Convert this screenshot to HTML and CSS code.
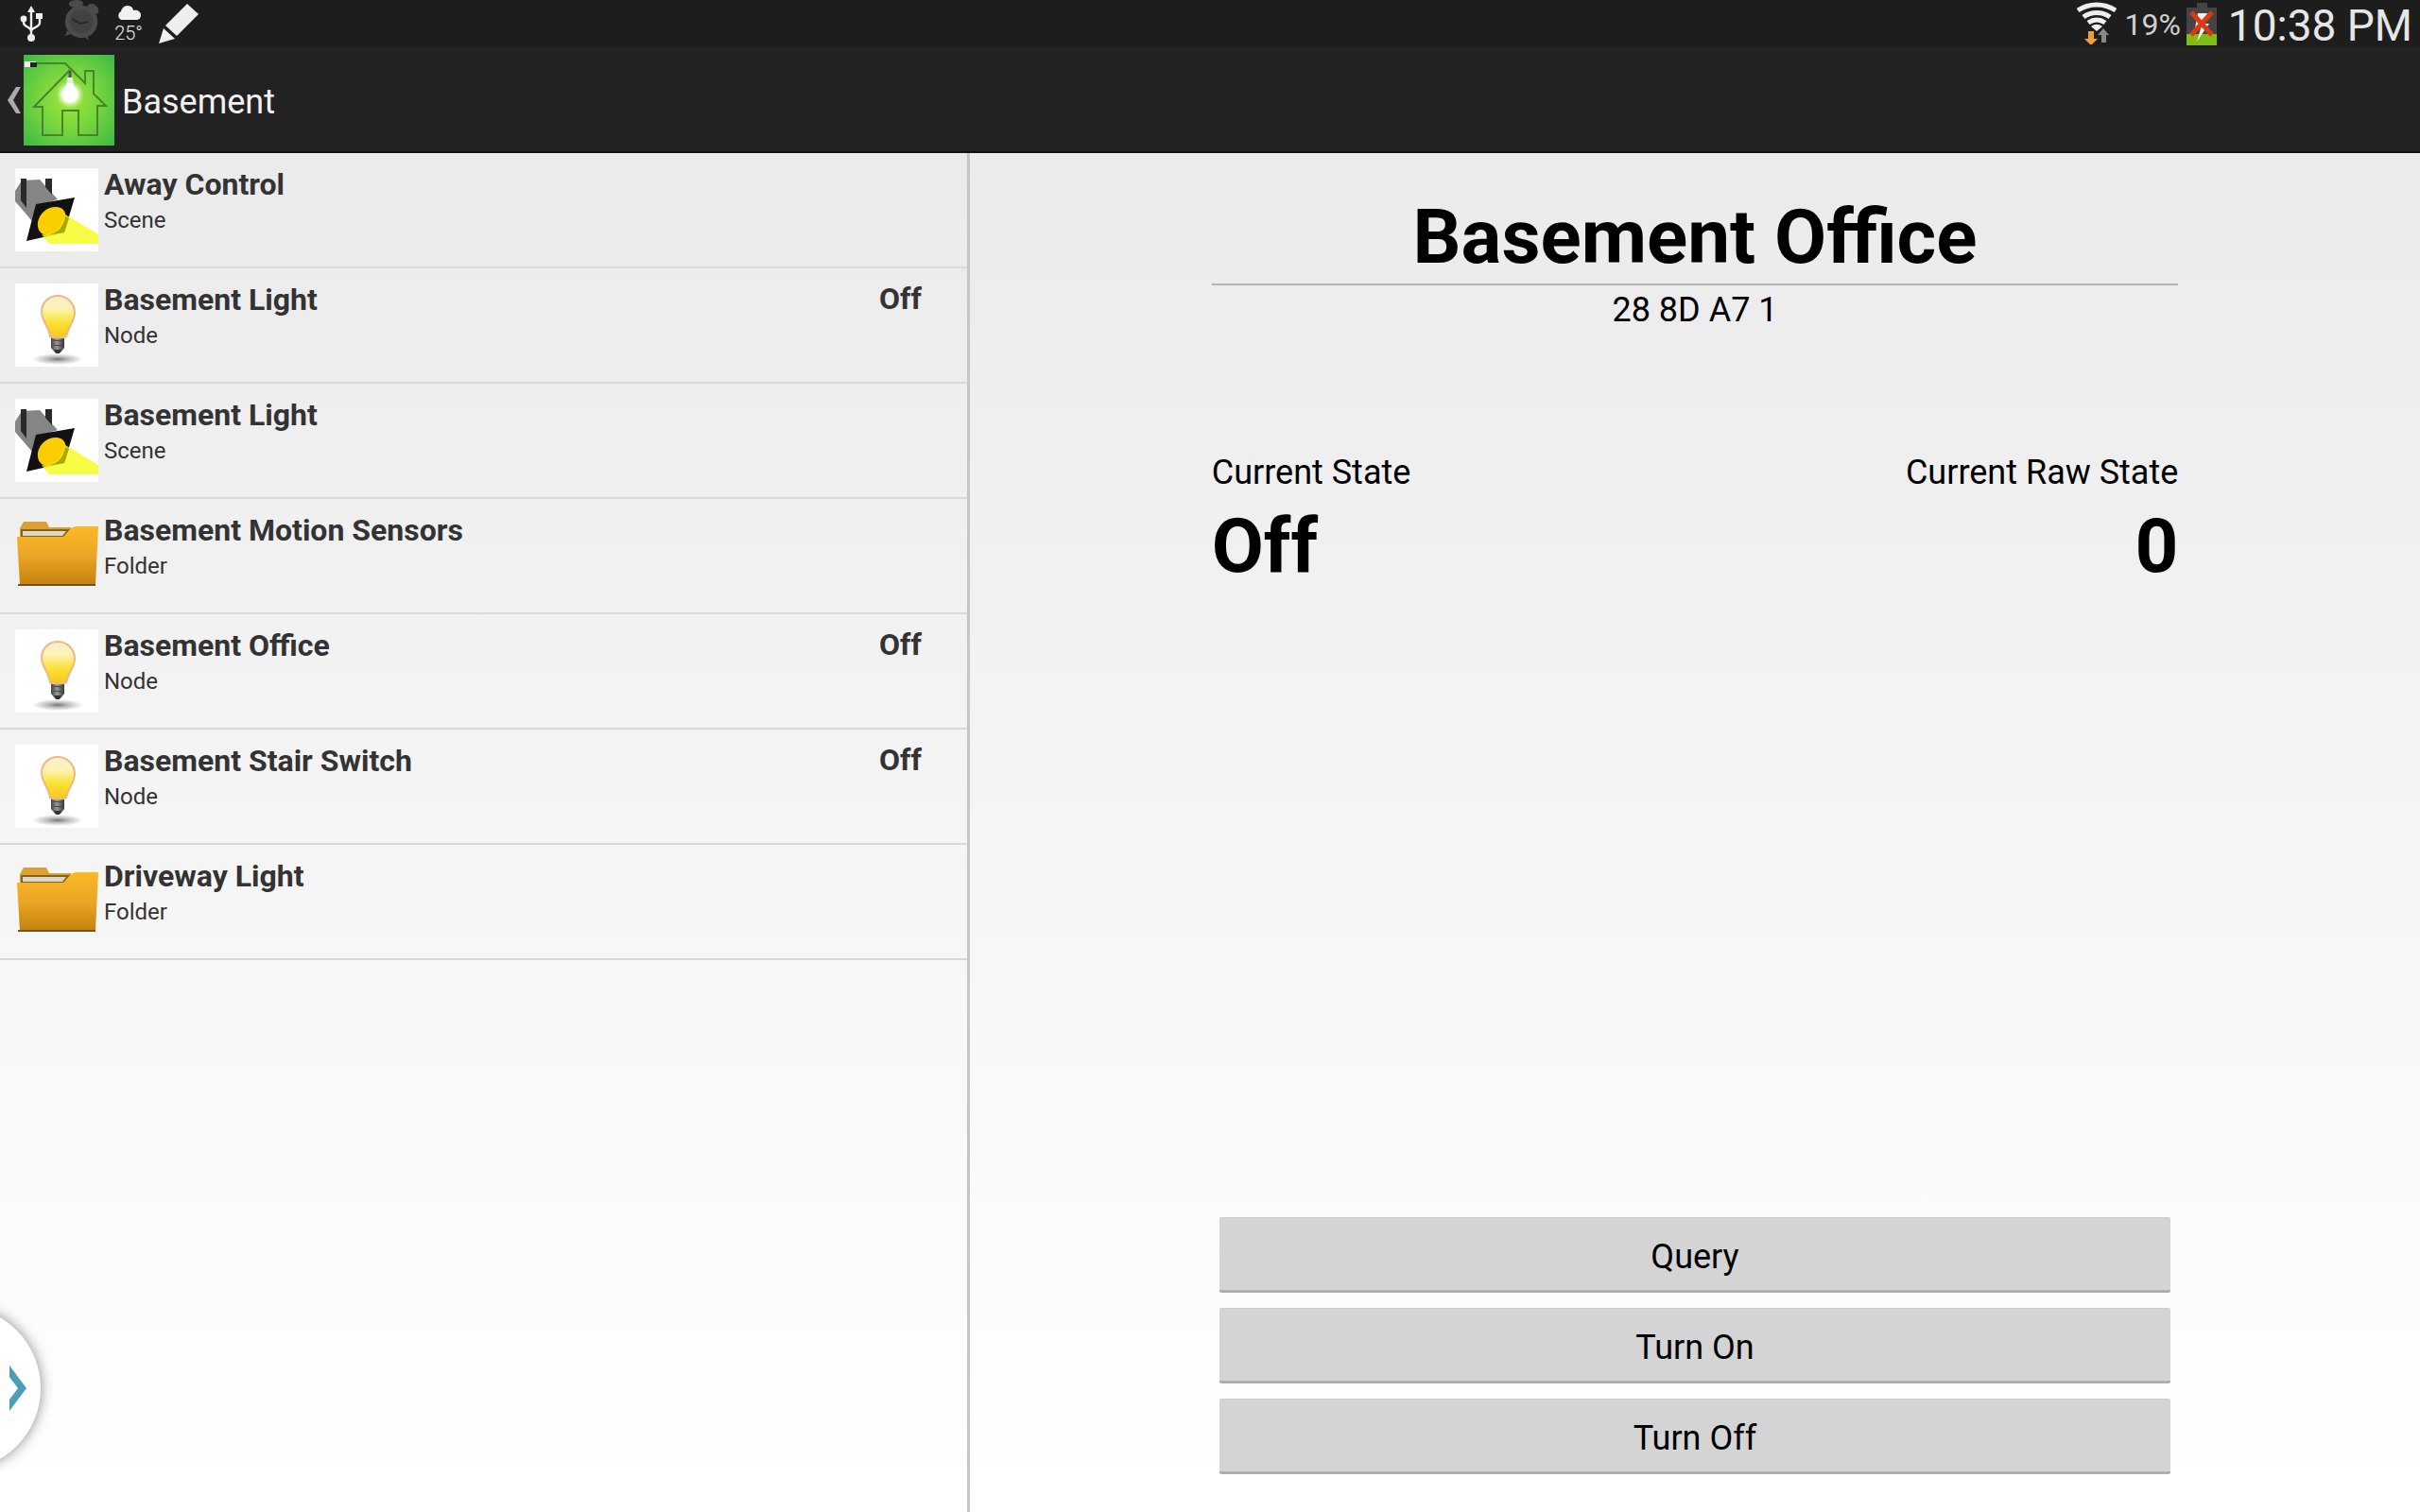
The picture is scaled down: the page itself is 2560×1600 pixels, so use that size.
FILE: index.html
```html
<!DOCTYPE html>
<html lang="en">
<head>
<meta charset="utf-8">
<meta name="viewport" content="width=device-width, initial-scale=1">
<title>Basement</title>
<link rel="stylesheet" href="styles.css">
</head>
<body>
<svg class="defs" aria-hidden="true">
  <defs>
    <linearGradient id="glass" x1="0" y1="0" x2="0" y2="1">
      <stop offset="0" stop-color="#fbeed2"/><stop offset=".3" stop-color="#fdf3b4"/><stop offset=".65" stop-color="#fbe032"/><stop offset="1" stop-color="#f6c81c"/>
    </linearGradient>
    <linearGradient id="cap" x1="0" y1="0" x2="1" y2="0">
      <stop offset="0" stop-color="#444"/><stop offset=".45" stop-color="#999"/><stop offset="1" stop-color="#333"/>
    </linearGradient>
    <radialGradient id="shade">
      <stop offset="0" stop-color="#777"/><stop offset=".4" stop-color="#bbb"/><stop offset="1" stop-color="#fff"/>
    </radialGradient>
    <linearGradient id="folder-front" x1="0" y1="0" x2="0" y2="1">
      <stop offset="0" stop-color="#fcb924"/><stop offset=".5" stop-color="#eaa625"/><stop offset="1" stop-color="#c4820d"/>
    </linearGradient>
    <radialGradient id="lawn" r=".7">
      <stop offset="0" stop-color="#a0e63c"/><stop offset=".5" stop-color="#74d43e"/><stop offset="1" stop-color="#3db845"/>
    </radialGradient>
    <radialGradient id="glow">
      <stop offset="0" stop-color="#fff"/><stop offset=".5" stop-color="#fff"/><stop offset="1" stop-color="#d8f59a" stop-opacity="0"/>
    </radialGradient>
  </defs>
  <symbol id="scene" viewBox="0 0 88 88">
    <path fill="#fff" d="M0 0h88v88H0z"/>
    <path fill="#858585" d="M0 24 7 13 26 12 45 33 23 40 18 56 0 35z"/>
    <path fill="#292929" d="M6 11h6v31l-6-8zM32 11h7v17l-7-8z"/>
    <path fill="#111" d="M22 38 63 31 52 68 12 77z"/>
    <path fill="#fbce00" d="M24 57c2-9 9-16 19-16 8 0 12 6 10 14-2 9-9 15-18 16-8 0-12-6-11-14z"/>
    <path fill="#f5fb22" fill-opacity=".84" d="M53 49 88 70v10H36l-8-10c13 2 22-7 25-21z"/>
    <path fill="#a9a80a" d="m53 51 4 2-5 15-19 3c12-2 18-9 20-20z"/>
  </symbol>
  <symbol id="node" viewBox="0 0 88 88">
    <path fill="#fff" d="M0 0h88v88H0z"/>
    <ellipse cx="45" cy="80" rx="27" ry="6" fill="url(#shade)"/>
    <path fill="url(#cap)" d="M38 56h14v12l-4 5h-6l-4-5z"/>
    <path stroke="#484848" d="m38 60 14 1M38 65l14 1"/>
    <path fill="#333" d="M41 70h8l-2 4h-4z"/>
    <path fill="url(#glass)" stroke="#ecb887" stroke-width="2" d="M45 13c10 0 18 8 18 18 0 9-6 13-9 25-4 2-13 2-17 0-2-12-9-17-9-26 0-10 8-17 17-17z"/>
  </symbol>
  <symbol id="folder" viewBox="0 0 88 88">
    <path fill="#dba033" d="M5 24V15l4-7h24l3 6h23v12H5z"/>
    <path fill="#84641c" d="M6 16h52v8H6z"/>
    <path fill="#dcd8c4" d="M8 18h46l-4 5H8z"/>
    <path fill="url(#folder-front)" d="M2 24h49l8-9 5-2h24l-3 62H5z"/>
    <path stroke="#6b5529" stroke-width="2" d="M3 75h82"/>
  </symbol>
</svg>

<div class="status-bar">
  <div class="status-left">
    <svg class="usb" viewBox="0 0 26 40" role="img" aria-label="USB connected">
      <g fill="none" stroke="#eee" stroke-width="2.4"><path d="M13 34V6M5 14v4c0 5 8 4 8 9 0-4 9-4 9-9v-6"/></g>
      <g fill="#eee"><path d="m13 0 4 7H9z"/><circle cx="13" cy="34" r="4"/><circle cx="5" cy="14" r="3.4"/><path d="M18 8h7v6h-7z"/></g>
    </svg>
    <svg class="alarm" viewBox="0 0 42 46" role="img" aria-label="Alarm">
      <g fill="#4b4b4b"><circle cx="20" cy="24" r="18"/><ellipse cx="14" cy="4" rx="8" ry="4" transform="rotate(-4 14 4)"/><ellipse cx="33" cy="10" rx="7" ry="5" transform="rotate(40 33 10)"/><path d="m4 34-2 6 7-3zM23 40l5 5-1-8z"/></g>
      <circle cx="20" cy="24" r="13" fill="#424242"/><path fill="none" stroke="#272727" stroke-width="2" d="m10 21 9 5 8-2"/>
    </svg>
    <div class="weather">
      <svg viewBox="0 0 26 15" aria-hidden="true"><path fill="#f2f2f2" d="M5 15a5 5 0 0 1 0-9C6 2 9 0 12 0c4 0 6 3 6 5 4-1 8 1 8 5 0 3-2 5-5 5z"/></svg>
      <span>25°</span>
    </div>
    <svg class="pencil" viewBox="0 0 42 42" role="img" aria-label="Note"><g fill="#eee"><path d="m30 0 12 11-23 23L7 23z"/><path d="m5 26 12 11-17 5z"/></g></svg>
  </div>
  <div class="status-right">
    <svg class="wifi" viewBox="0 0 42 45" role="img" aria-label="Wi-Fi">
      <g fill="none" stroke="#eee" stroke-width="5"><path d="M1 9c12-8 28-8 40 0M7 16c8-6 20-6 28 0M12 22c6-4 12-4 18 0"/></g>
      <path fill="#eee" d="M15 26c4-3 8-3 12 0l-6 5z"/>
      <path fill="#eda032" d="M12 31h6v8h4l-7 7-7-7h4z"/><path fill="#888" d="M26 43v-8h-4l6-7 6 7h-3v8z"/>
    </svg>
    <span class="percent">19%</span>
    <svg class="battery" viewBox="0 0 32 45" role="img" aria-label="Battery not charging">
      <path fill="#444" d="M11 0h11v5h10v32H0V5h11z"/><path fill="#7fbd16" d="M0 33h32v12H0z"/>
      <path fill="#eee" d="M12 11h10l-3 11h5L11 41l4-14h-6z"/>
      <path stroke="#d83a14" stroke-width="5" d="m5 10 22 24M27 10 5 34"/>
    </svg>
    <time class="clock">10:38 PM</time>
  </div>
</div>

<header class="action-bar">
  <a class="up" href="#" aria-label="Navigate up">
    <svg class="caret" viewBox="0 0 14 28" aria-hidden="true"><path fill="#aaa" d="M9 0h5L6 14l8 14H9L0 14z"/></svg>
    <svg class="logo" viewBox="0 0 96 96" aria-hidden="true">
      <path fill="url(#lawn)" d="M0 0h96v96H0z"/>
      <path fill="none" stroke="#47852a" stroke-width="2" d="M14 9h30l21 21V17h9v24l13 13H78v31H58V59H41v26H20V55H11L49 16"/>
      <path fill="#eee" d="M1 7h12v6H1z"/><path fill="#222" d="M7 8h7v5H7z"/>
      <circle cx="49" cy="42" r="15" fill="url(#glow)"/>
      <path stroke="#555" stroke-width="3" d="M49 17v9"/><path fill="#e6efdb" d="M46 24h6l1 9h-8z"/>
      <path fill="#fff" d="M46 30h6c1 4 5 7 5 12a8 8 0 0 1-16 0c0-5 4-8 5-12z"/>
    </svg>
  </a>
  <h1>Basement</h1>
</header>

<main class="panes">
  <nav class="list-pane" aria-label="Devices">
    <ul>
      <li><a href="#"><svg aria-hidden="true"><use href="#scene"/></svg><span class="label"><strong>Away Control</strong><small>Scene</small></span></a></li>
      <li><a href="#"><svg aria-hidden="true"><use href="#node"/></svg><span class="label"><strong>Basement Light</strong><small>Node</small></span><b>Off</b></a></li>
      <li><a href="#"><svg aria-hidden="true"><use href="#scene"/></svg><span class="label"><strong>Basement Light</strong><small>Scene</small></span></a></li>
      <li><a href="#"><svg aria-hidden="true"><use href="#folder"/></svg><span class="label"><strong>Basement Motion Sensors</strong><small>Folder</small></span></a></li>
      <li><a href="#"><svg aria-hidden="true"><use href="#node"/></svg><span class="label"><strong>Basement Office</strong><small>Node</small></span><b>Off</b></a></li>
      <li><a href="#"><svg aria-hidden="true"><use href="#node"/></svg><span class="label"><strong>Basement Stair Switch</strong><small>Node</small></span><b>Off</b></a></li>
      <li><a href="#"><svg aria-hidden="true"><use href="#folder"/></svg><span class="label"><strong>Driveway Light</strong><small>Folder</small></span></a></li>
    </ul>
  </nav>
  <section class="detail">
    <h2>Basement Office</h2>
    <p class="address">28 8D A7 1</p>
    <dl class="states">
      <div><dt>Current State</dt><dd>Off</dd></div>
      <div><dt>Current Raw State</dt><dd>0</dd></div>
    </dl>
    <div class="actions">
      <button type="button">Query</button>
      <button type="button">Turn On</button>
      <button type="button">Turn Off</button>
    </div>
  </section>
</main>

<button class="drawer-handle" type="button" aria-label="Open tray">
  <svg viewBox="0 0 18 48" aria-hidden="true"><path fill="#4b9db8" d="M0 0v12l9 12-9 12v12l18-24z"/></svg>
</button>
</body>
</html>
```
FILE: styles.css
```css
* {
  box-sizing: border-box;
}

body {
  margin: 0;
  min-height: 100vh;
  display: flex;
  flex-direction: column;
  font-family: Roboto, "Liberation Sans", sans-serif;
  color: #000;
  background: linear-gradient(#e8e8e8, #fff);
  overflow-x: hidden;
}

h1, h2, p, ul, dl, dd {
  margin: 0;
  padding: 0;
}

svg {
  display: block;
  flex: none;
}

.defs {
  position: absolute;
  width: 0;
  height: 0;
}

/* Status bar */
.status-bar {
  display: flex;
  justify-content: space-between;
  height: 50px;
  background: #1d1d1d;
  color: #e6e6e6;
}

.status-left,
.status-right {
  display: flex;
  align-items: flex-start;
}

.status-left {
  padding: 4px 0 0 20px;
}

.usb {
  width: 26px;
  height: 40px;
  margin-top: 2px;
}

.alarm {
  width: 42px;
  height: 44px;
  margin: -4px 0 0 20px;
}

.weather {
  display: flex;
  flex-direction: column;
  align-items: center;
  width: 36px;
  margin: 2px 0 0 10px;
  font-size: 20px;
  font-weight: 300;
  line-height: 28px;
}

.weather svg {
  width: 26px;
  height: 15px;
}

.pencil {
  width: 42px;
  height: 42px;
  margin-left: 14px;
}

.status-right {
  padding: 2px 8px 0 0;
}

.wifi {
  width: 42px;
  height: 45px;
}

.percent {
  margin-left: 8px;
  color: #d0d0d0;
  font-size: 32px;
  line-height: 48px;
}

.battery {
  width: 32px;
  height: 45px;
  margin: 1px 12px 0 6px;
}

.clock {
  font-size: 46px;
  line-height: 50px;
}

/* Action bar */
.action-bar {
  display: flex;
  align-items: center;
  height: 112px;
  padding: 2px 0 0 8px;
  background: #222;
  border-bottom: 2px solid #111;
  color: #f0f0f0;
}

.up {
  display: flex;
  align-items: center;
  gap: 3px;
}

.caret {
  width: 14px;
  height: 28px;
}

.logo {
  width: 96px;
  height: 96px;
}

.action-bar h1 {
  margin-left: 8px;
  padding-top: 4px;
  font-size: 36px;
  font-weight: 400;
}

/* Two-pane content */
.panes {
  flex: 1;
  display: grid;
  grid-template-columns: calc(40% + 2px) 1fr;
}

.list-pane {
  border-right: 3px solid #c6c6c6;
}

.list-pane ul {
  list-style: none;
}

.list-pane a {
  display: flex;
  min-height: 122px;
  padding: 14px 48px 0 16px;
  border-bottom: 2px solid #d9d9d9;
  color: #333;
  text-decoration: none;
}

.list-pane svg {
  width: 88px;
  height: 88px;
  margin-top: 2px;
}

.label {
  flex: 1;
  margin-left: 6px;
}

.label strong,
.label small {
  display: block;
}

.label strong,
.list-pane b {
  font-size: 32px;
  font-weight: 700;
  line-height: 38px;
}

.list-pane b {
  line-height: 36px;
}

.label small {
  font-size: 24px;
  line-height: 38px;
}

.detail {
  display: flex;
  flex-direction: column;
  padding: 40px 16.67% 40px;
}

.detail h2 {
  border-bottom: 2px solid #b4b4b4;
  font-size: 80px;
  line-height: 98px;
  text-align: center;
}

.address {
  font-size: 36px;
  line-height: 52px;
  text-align: center;
}

.states {
  display: flex;
  justify-content: space-between;
  margin-top: 124px;
}

.states div:last-child {
  text-align: right;
}

.states dt {
  font-size: 36px;
  line-height: 44px;
}

.states dd {
  padding-top: 8px;
  font-size: 80px;
  font-weight: 700;
  line-height: 96px;
}

.actions {
  display: flex;
  flex-direction: column;
  gap: 16px;
  margin-top: auto;
  padding: 0 8px;
}

.actions button {
  height: 80px;
  padding: 5px 0 0;
  border: 0;
  border-top: 1px solid #ccc;
  border-bottom: 3px solid #aeaeae;
  border-radius: 2px;
  background: #d4d4d4;
  color: #000;
  font: 400 36px/44px Roboto, "Liberation Sans", sans-serif;
}

/* Edge tray handle */
.drawer-handle {
  position: fixed;
  left: -131px;
  bottom: 44px;
  display: flex;
  align-items: center;
  justify-content: flex-end;
  width: 174px;
  height: 174px;
  padding: 0 15px 0 0;
  border: 0;
  border-radius: 50%;
  background: #fff;
  box-shadow: 0 0 14px rgb(0 0 0 / 45%);
}

.drawer-handle svg {
  width: 18px;
  height: 48px;
}
```
